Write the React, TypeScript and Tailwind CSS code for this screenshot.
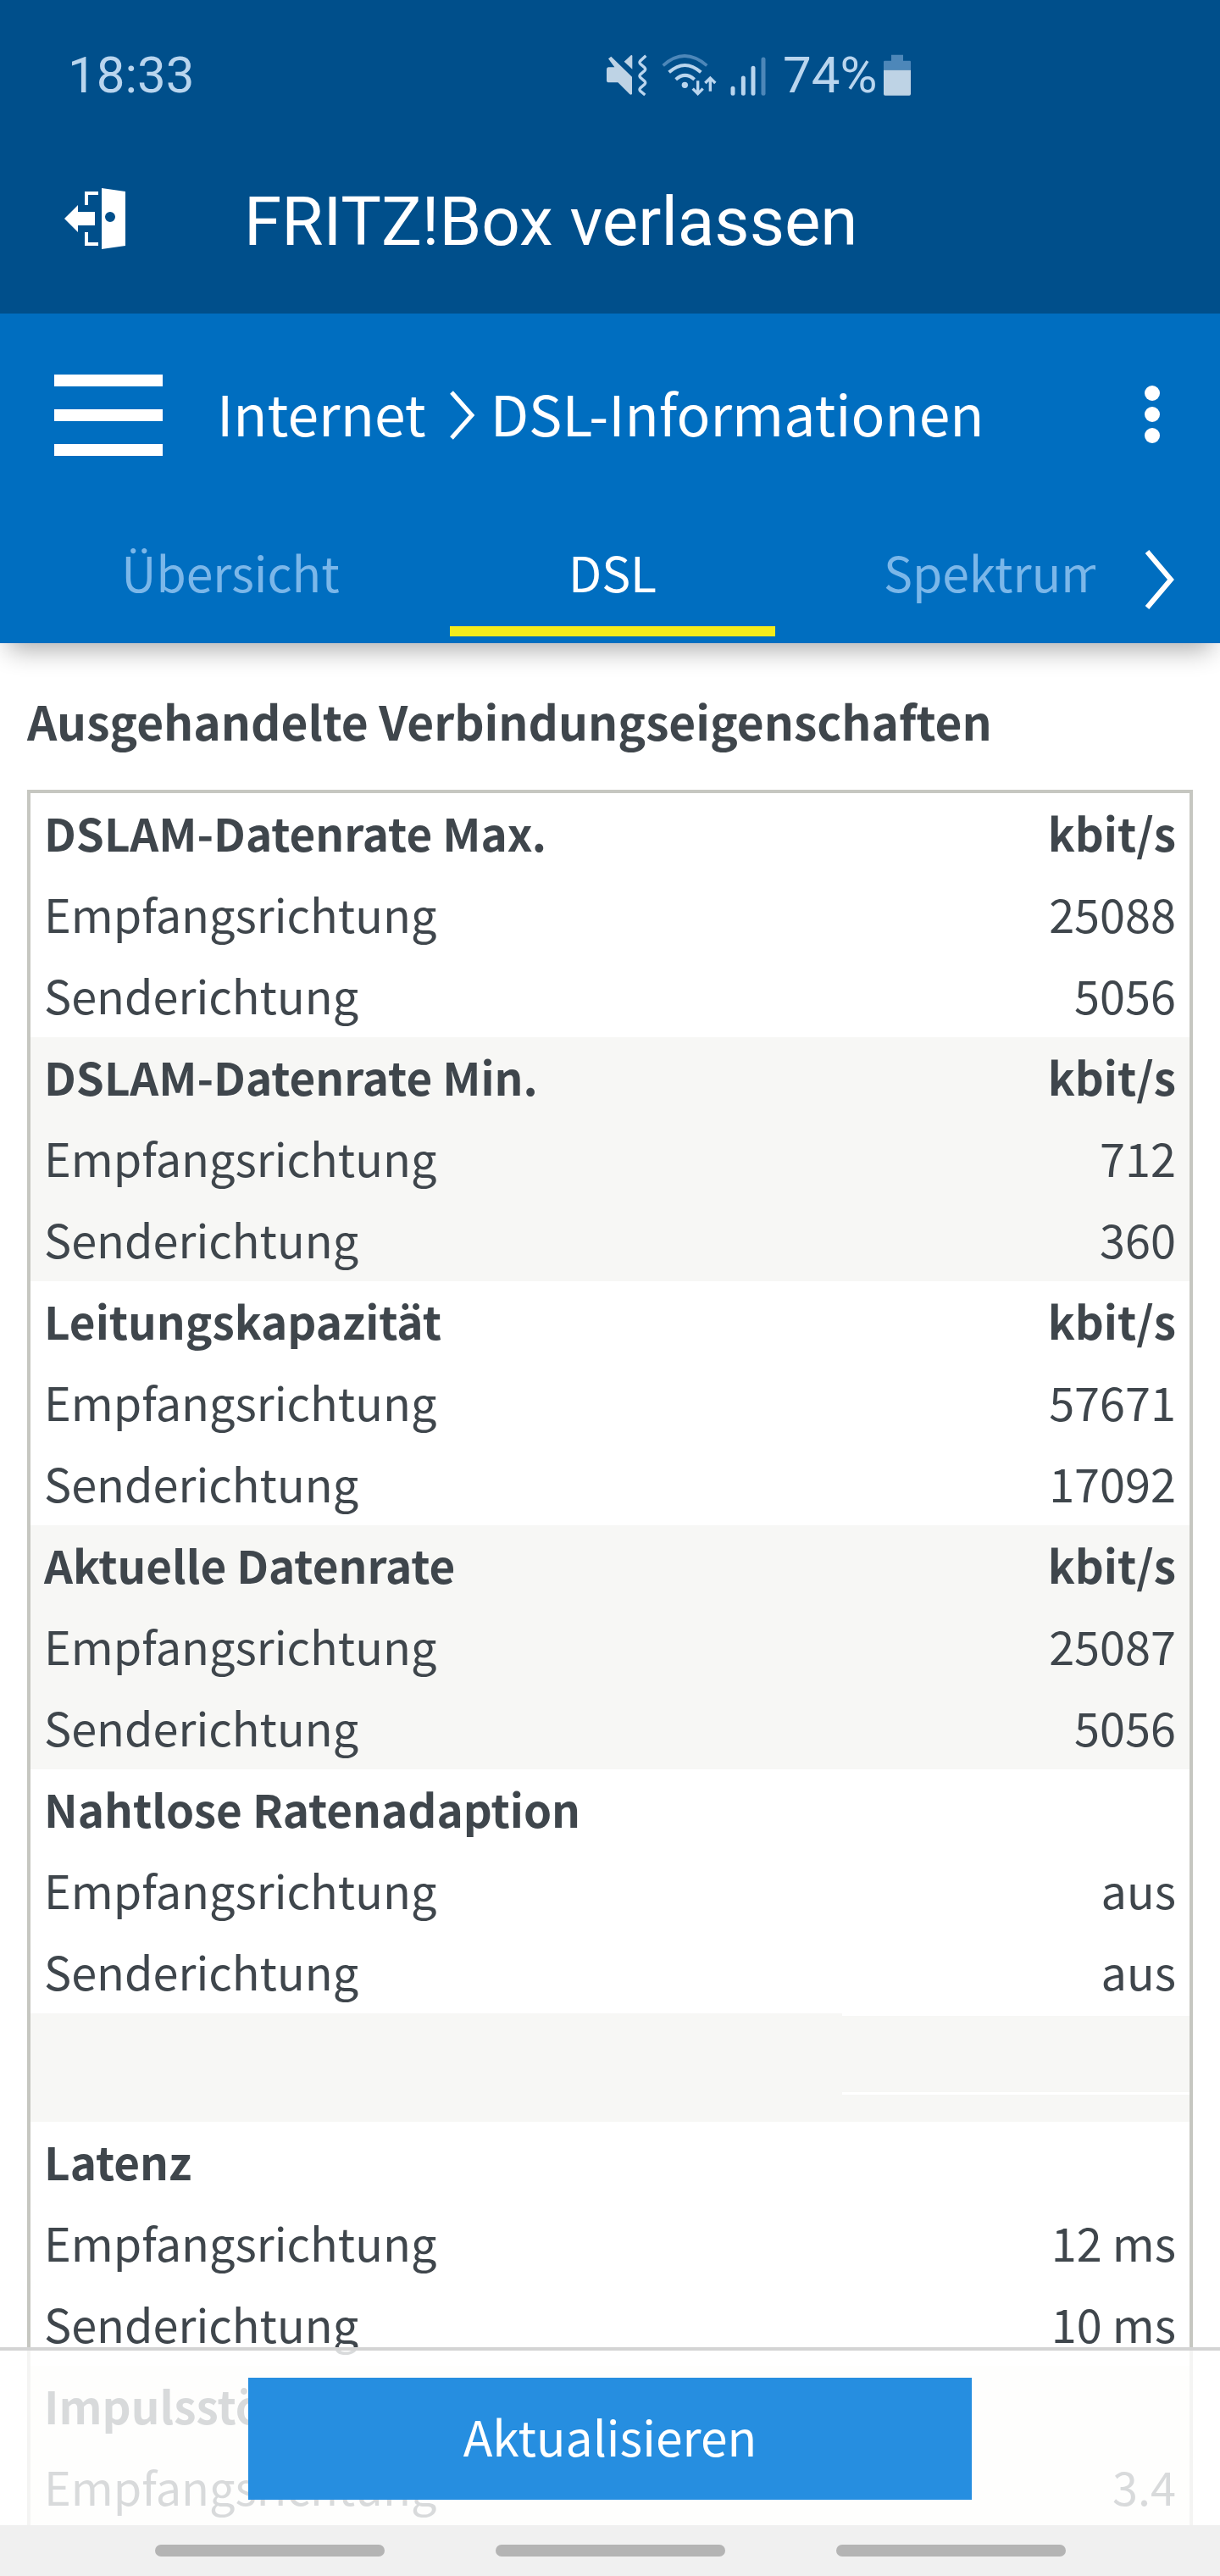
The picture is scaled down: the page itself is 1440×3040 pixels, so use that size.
type Section = {
  title: string;
  unit?: string;
  rows: [string, string][];
};

const tabs = [
  { label: "Übersicht", active: false },
  { label: "DSL", active: true },
  { label: "Spektrum", active: false },
];

const rates: Section[] = [
  { title: "DSLAM-Datenrate Max.", unit: "kbit/s", rows: [["Empfangsrichtung", "25088"], ["Senderichtung", "5056"]] },
  { title: "DSLAM-Datenrate Min.", unit: "kbit/s", rows: [["Empfangsrichtung", "712"], ["Senderichtung", "360"]] },
  { title: "Leitungskapazität", unit: "kbit/s", rows: [["Empfangsrichtung", "57671"], ["Senderichtung", "17092"]] },
  { title: "Aktuelle Datenrate", unit: "kbit/s", rows: [["Empfangsrichtung", "25087"], ["Senderichtung", "5056"]] },
  { title: "Nahtlose Ratenadaption", rows: [["Empfangsrichtung", "aus"], ["Senderichtung", "aus"]] },
];

const quality: Section[] = [
  { title: "Latenz", rows: [["Empfangsrichtung", "12 ms"], ["Senderichtung", "10 ms"]] },
  { title: "Impulsstörungsschutz (INP)", rows: [["Empfangsrichtung", "3.4"]] },
];

function StatusBar() {
  return (
    <div className="flex h-[178px] items-center pl-20 text-[60px] leading-[72px] text-[#b9d5ee]">
      <span className="w-[635px]">18:33</span>
      <div className="flex items-center">
        <svg className="mr-4 h-[50px] w-[50px]" viewBox="43 40 150 150" fill="none">
          <path d="M52 86h22L52 56l10-8 74 72v60q-2 5-8 2L86 140H54q-8 0-8-8V94q0-8 6-8Z" fill="#bed3e5" />
          <path d="M108 66l24-22q5-3 5 3v46Z" fill="#bed3e5" />
          <path d="M185 45l-20 19q-4 5 0 10l16 14q4 5 0 10l-16 14q-4 5 0 10l16 14q4 5 0 10l-16 14q-4 5 0 10l17 14" stroke="#b9d5ee" strokeWidth="10" />
        </svg>
        <svg className="mr-4 h-[50px] w-[65px]" viewBox="242 40 195 150" fill="none">
          <path d="M247 80Q322 12 402 80" stroke="#4d87b9" strokeWidth="11" />
          <path d="M268 104Q324 54 381 104" stroke="#b9d5ee" strokeWidth="12" />
          <path d="M292 129Q325 100 358 129" stroke="#b9d5ee" strokeWidth="12" />
          <circle cx="324" cy="149" r="11" fill="#b9d5ee" />
          <path d="M370 134v43M352 162l18 18 18-18M414 171v-42M396 142l18-18 18 18" stroke="#b9d5ee" strokeWidth="10" />
        </svg>
        <svg className="h-[50px] w-[42px]" viewBox="484 40 126 150" fill="none" strokeWidth="15" strokeLinecap="round">
          <path d="M493 161v18M530 124v55M565 89v90" stroke="#b9d5ee" />
          <path d="M601 58v121" stroke="#4d87b9" />
        </svg>
        <span className="ml-5 mr-2">74%</span>
        <svg className="h-[50px] w-8" viewBox="1032 40 96 150">
          <path d="M1059 42h42v21h24q3 0 3 4v29h-96V67q0-4 4-4h23Z" fill="#4d87b9" />
          <path d="M1032 96h96v84q0 6-5 6h-86q-5 0-5-6Z" fill="#bed3e5" />
        </svg>
      </div>
    </div>
  );
}

function AppBar() {
  return (
    <div className="flex h-48 items-start pl-[76px] pt-9 text-white">
      <button type="button" aria-label="Verlassen" className="mt-2 h-[72px] w-[72px]">
        <svg className="h-full w-full" viewBox="0 0 72 72" fill="currentColor">
          <path d="M0 36 16 20v8h20v16H16v8Z" />
          <path d="M24 4h16v4H28v12h-4ZM24 52h4v12h12v4H24Z" />
          <path fillRule="evenodd" d="M44 0l28 4v64l-28 4ZM54 28a6 6 0 1 0 0 12a6 6 0 1 0 0-12Z" />
        </svg>
      </button>
      <span className="ml-[140px] text-[80px] leading-[96px]">FRITZ!Box verlassen</span>
    </div>
  );
}

function Toolbar() {
  return (
    <div className="flex h-[240px] items-center pl-16 pr-[71px] text-white">
      <button type="button" aria-label="Menü" className="flex w-32 flex-col gap-[27px]">
        <span className="h-[14px] bg-white" />
        <span className="h-[14px] bg-white" />
        <span className="h-[14px] bg-white" />
      </button>
      <div className="ml-16 flex flex-1 items-center text-[66px]">
        <a href="#internet" className="pb-2 leading-[96px]">Internet</a>
        <svg className="ml-[27px] mr-[17px] h-[58px] w-8" viewBox="0 0 32 58" fill="none" stroke="currentColor" strokeWidth="5">
          <path d="M3 2 27 29 3 56" />
        </svg>
        <h1 className="pb-2 leading-[96px]">DSL-Informationen</h1>
      </div>
      <button type="button" aria-label="Mehr" className="flex flex-col gap-[7px] pb-0.5">
        <span className="h-[18px] w-[18px] rounded-full bg-white" />
        <span className="h-[18px] w-[18px] rounded-full bg-white" />
        <span className="h-[18px] w-[18px] rounded-full bg-white" />
      </button>
    </div>
  );
}

function TabBar() {
  return (
    <div className="flex pb-2">
      <nav className="flex min-w-0 flex-1 gap-[67px] overflow-hidden pl-20">
        {tabs.map((t) => (
          <a
            key={t.label}
            href={"#" + t.label}
            className={
              t.active
                ? "flex h-[141px] w-96 shrink-0 justify-center border-b-12 border-[#f5ec1b] pt-[14px] text-[57px] leading-[100px] text-white"
                : "flex h-[141px] w-96 shrink-0 justify-center pt-[14px] text-[57px] leading-[100px] text-[#7bb7e9]"
            }
          >
            {t.label}
          </a>
        ))}
      </nav>
      <button type="button" aria-label="Weitere Reiter" className="flex w-[147px] justify-center pl-1 pt-[38px] text-white">
        <svg className="h-[72px] w-9" viewBox="0 0 36 72" fill="none" stroke="currentColor" strokeWidth="6">
          <path d="M3 3 31 36 3 69" />
        </svg>
      </button>
    </div>
  );
}

function SectionRows({ section, shaded }: { section: Section; shaded: boolean }) {
  return (
    <tbody className={shaded ? "bg-[#f7f7f5]" : "bg-white"}>
      <tr className="text-[53px]">
        <th scope="rowgroup" className="p-0 pb-1 pl-4 text-left font-bold">{section.title}</th>
        <th className="p-0 pb-1 pr-4 text-right font-bold">{section.unit}</th>
      </tr>
      {section.rows.map(([label, value]) => (
        <tr key={label}>
          <td className="p-0 pb-1 pl-4">{label}</td>
          <td className="p-0 pb-1 pr-4 text-right">{value}</td>
        </tr>
      ))}
    </tbody>
  );
}

export default function App() {
  return (
    <div className="min-h-screen bg-white font-['Noto_Sans_CJK_SC',sans-serif] text-[#3f464c]">
      <header className="relative shadow-[0_18px_28px_-10px_rgba(0,0,0,0.32)]">
        <div className="bg-[#004f8b] font-[Roboto,sans-serif]">
          <StatusBar />
          <AppBar />
        </div>
        <div className="bg-[#006ec0]">
          <Toolbar />
          <TabBar />
        </div>
      </header>

      <main className="px-8 pt-[45px]">
        <h2 className="text-[55px] font-bold leading-[92px]">Ausgehandelte Verbindungseigenschaften</h2>
        <div className="mt-9 border-4 border-[#c6c7c1]">
          <table className="w-full table-fixed border-collapse text-[54px] leading-[92px]">
            <colgroup>
              <col className="w-[70%]" />
              <col className="w-[30%]" />
            </colgroup>
            {rates.map((s, i) => (
              <SectionRows key={s.title} section={s} shaded={i % 2 === 1} />
            ))}
            <tbody className="bg-[#f7f7f5]">
              <tr>
                <td className="h-32 p-0" />
                <td className="h-32 p-0 align-top">
                  <div className="h-24 border-y-3 border-white" />
                </td>
              </tr>
            </tbody>
            {quality.map((s, i) => (
              <SectionRows key={s.title} section={s} shaded={i % 2 === 1} />
            ))}
          </table>
        </div>
      </main>

      <footer className="fixed inset-x-0 bottom-0">
        <div className="flex justify-center border-t-4 border-[#d4d4d4] bg-white/80 px-8 pb-[30px] pt-8">
          <button type="button" className="h-36 w-full max-w-[854px] bg-[#268ee0] pb-2 text-[57px] leading-[136px] text-white">
            Aktualisieren
          </button>
        </div>
        <div className="flex h-[60px] items-center justify-center gap-[131px] bg-[#f0f0f0]">
          <span className="h-[14px] w-[271px] rounded-full bg-[#b4b4b4]" />
          <span className="h-[14px] w-[271px] rounded-full bg-[#b4b4b4]" />
          <span className="h-[14px] w-[271px] rounded-full bg-[#b4b4b4]" />
        </div>
      </footer>
    </div>
  );
}
